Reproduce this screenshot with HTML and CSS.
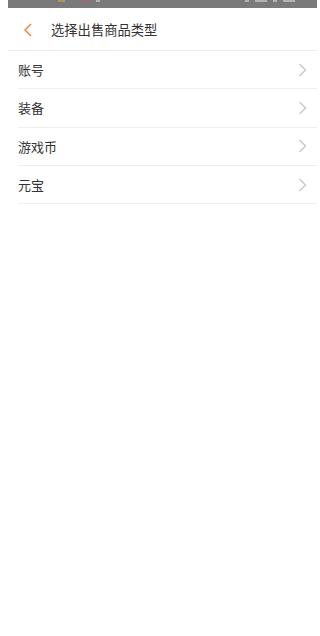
FILE: index.html
```html
<!DOCTYPE html>
<html lang="zh-CN">
<head>
<meta charset="utf-8">
<title>选择出售商品类型</title>
<link rel="stylesheet" href="styles.css">
</head>
<body>
<div class="page">
  <div class="statusbar">
    <span class="dot dot-yellow"></span>
    <span class="dot dot-red"></span>
    <span class="dot dot-white dot-a"></span>
    <span class="spacer"></span>
    <span class="dot dot-white"></span>
    <span class="dot dot-white wide"></span>
    <span class="dot dot-white"></span>
    <span class="dot dot-white wide"></span>
  </div>
  <header class="header">
    <svg class="back" width="10" height="14" viewBox="0 0 10 14"><path d="M8 1 L2 7 L8 13" fill="none" stroke="#e8823d" stroke-width="1.4"/></svg>
    <h1 class="title">选择出售商品类型</h1>
  </header>
  <ul class="list">
    <li class="row"><span class="label">账号</span><svg class="chev" width="9" height="14" viewBox="0 0 9 14"><path d="M1.5 1 L7.5 7 L1.5 13" fill="none" stroke="#c9c9c9" stroke-width="1.4"/></svg></li>
    <li class="row"><span class="label">装备</span><svg class="chev" width="9" height="14" viewBox="0 0 9 14"><path d="M1.5 1 L7.5 7 L1.5 13" fill="none" stroke="#c9c9c9" stroke-width="1.4"/></svg></li>
    <li class="row"><span class="label">游戏币</span><svg class="chev" width="9" height="14" viewBox="0 0 9 14"><path d="M1.5 1 L7.5 7 L1.5 13" fill="none" stroke="#c9c9c9" stroke-width="1.4"/></svg></li>
    <li class="row"><span class="label">元宝</span><svg class="chev" width="9" height="14" viewBox="0 0 9 14"><path d="M1.5 1 L7.5 7 L1.5 13" fill="none" stroke="#c9c9c9" stroke-width="1.4"/></svg></li>
  </ul>
</div>
</body>
</html>
```
FILE: styles.css
```css
html, body {
  margin: 0;
  padding: 0;
  background: #fff;
}
body {
  font-family: "Noto Sans CJK SC", "Noto Sans", sans-serif;
  color: #333;
}
.page {
  margin: 0 3px 0 8px;
}
.statusbar {
  height: 8px;
  background: #7a7a7a;
  display: flex;
  align-items: flex-start;
  gap: 6px;
  padding: 0 22px 0 50px;
}
.dot {
  display: block;
  width: 7px;
  height: 2px;
}
.dot-yellow { background: #a89a5a; }
.dot-red { background: #a0686e; margin-left: 12px; }
.dot-white { background: #b4b4b4; width: 4px; }
.dot-white.wide { width: 12px; }
.spacer { flex: 1; }
.header {
  height: 42px;
  border-bottom: 1px solid #ececec;
  display: flex;
  align-items: center;
  padding-left: 15px;
}
.back {
  display: block;
  margin-top: 1px;
}
.title {
  margin: 0 0 0 18px;
  font-size: 13.3px;
  font-weight: normal;
  color: #333;
}
.list {
  list-style: none;
  margin: 0 0 0 10px;
  padding: 0;
}
.row {
  height: 37.3px;
  border-bottom: 1px solid #efefef;
  display: flex;
  align-items: center;
  justify-content: space-between;
  padding-right: 10px;
}
.label {
  font-size: 13px;
  color: #333;
}
.chev {
  display: block;
}
```
